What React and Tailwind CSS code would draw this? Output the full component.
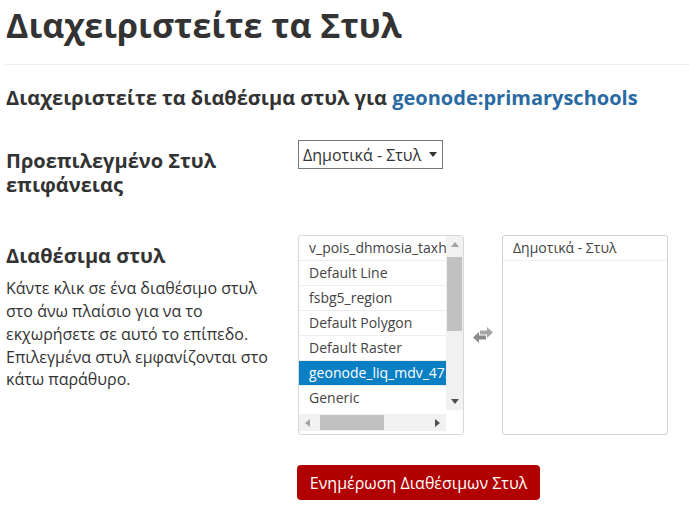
import React from "react";

const availableStyles = [
  "v_pois_dhmosia_taxh",
  "Default Line",
  "fsbg5_region",
  "Default Polygon",
  "Default Raster",
  "geonode_liq_mdv_4720",
  "Generic",
  "Default Point",
];

function Tri({ dir, color }) {
  if (dir === "up") {
    return (
      <svg width="8" height="5" viewBox="0 0 8 5">
        <polygon points="0,5 4,0 8,5" fill={color} />
      </svg>
    );
  }
  if (dir === "down") {
    return (
      <svg width="8" height="5" viewBox="0 0 8 5">
        <polygon points="0,0 8,0 4,5" fill={color} />
      </svg>
    );
  }
  if (dir === "left") {
    return (
      <svg width="5" height="8" viewBox="0 0 5 8">
        <polygon points="5,0 5,8 0,4" fill={color} />
      </svg>
    );
  }
  return (
    <svg width="5" height="8" viewBox="0 0 5 8">
      <polygon points="0,0 0,8 5,4" fill={color} />
    </svg>
  );
}

function SwapIcon() {
  return (
    <svg width="22" height="18" viewBox="0 0 22 18">
      <path d="M8 4.5 H15 V1 L21 6.5 L15 12 V8.5 H8 Z" fill="#a6a6a6" />
      <path d="M14 9.5 H7 V6 L1 11.5 L7 17 V13.5 H14 Z" fill="#8a8a8a" />
    </svg>
  );
}

export default function App() {
  return (
    <div className="h-[509px] w-[689px] overflow-hidden bg-white text-[#333] font-['Open_Sans',_'Noto_Sans',_sans-serif]">
      <div className="pl-[5px]">
        <h1 className="pl-[1px] pt-[4px] text-[34px] font-bold leading-[42px]">
          Διαχειριστείτε τα Στυλ
        </h1>
        <div className="mt-[18px] h-px bg-[#eeeeee]" />
        <h3 className="mt-[21px] pl-[1px] text-[20px] font-bold leading-[24px]">
          Διαχειριστείτε τα διαθέσιμα στυλ για{" "}
          <span className="text-[#2a6aa3]">geonode:primaryschools</span>
        </h3>

        <div className="mt-[30px] flex">
          <div className="w-[293px] pl-[1px] pt-[9px] text-[20px] font-bold leading-[24px]">
            Προεπιλεγμένο Στυλ
            <br />
            επιφάνειας
          </div>
          <div className="flex h-[29px] items-center gap-[8px] border border-[#767676] pl-[4px] pr-[5px] text-[16px] leading-[20px] text-[#333]">
            <span>Δημοτικά - Στυλ</span>
            <Tri dir="down" color="#333" />
          </div>
        </div>

        <div className="mt-[38px] flex">
          <div className="w-[293px] pl-[1px]">
            <div className="pt-[9px] text-[20px] font-bold leading-[24px]">Διαθέσιμα στυλ</div>
            <p className="mt-[9px] text-[16px] leading-[22.86px] text-[#333]">
              Κάντε κλικ σε ένα διαθέσιμο στυλ
              <br />
              στο άνω πλαίσιο για να το
              <br />
              εκχωρήσετε σε αυτό το επίπεδο.
              <br />
              Επιλεγμένα στυλ εμφανίζονται στο
              <br />
              κάτω παράθυρο.
            </p>
          </div>

          <div className="flex">
            <div className="flex h-[200px] w-[166px] flex-col rounded-[3px] border border-[#d8d8d8] bg-white">
              <div className="flex h-[174px]">
                <div className="w-[147px] overflow-hidden">
                  {availableStyles.map((s, i) => (
                    <div
                      key={s}
                      className={
                        i === 5
                          ? "h-[25px] overflow-hidden whitespace-nowrap border-b border-[#eeeeee] bg-[#0a7fc4] pl-[10px] text-[14px] leading-[24px] text-white"
                          : "h-[25px] overflow-hidden whitespace-nowrap border-b border-[#eeeeee] pl-[10px] text-[14px] leading-[24px] text-[#444]"
                      }
                    >
                      {s}
                    </div>
                  ))}
                </div>
                <div className="flex w-[17px] flex-col items-center bg-[#f1f1f1]">
                  <div className="flex h-[17px] items-center justify-center">
                    <Tri dir="up" color="#a3a3a3" />
                  </div>
                  <div className="mt-[4px] h-[74px] w-[15px] bg-[#c1c1c1]" />
                  <div className="flex-1" />
                  <div className="flex h-[17px] items-center justify-center">
                    <Tri dir="down" color="#505050" />
                  </div>
                </div>
              </div>
              <div className="mt-[4px] flex h-[17px]">
                <div className="flex w-[147px] items-center bg-[#f1f1f1]">
                  <div className="flex w-[17px] justify-center">
                    <Tri dir="left" color="#a3a3a3" />
                  </div>
                  <div className="ml-[4px] h-[15px] w-[64px] bg-[#c1c1c1]" />
                  <div className="flex-1" />
                  <div className="flex w-[17px] justify-center">
                    <Tri dir="right" color="#505050" />
                  </div>
                </div>
                <div className="w-[17px] bg-white" />
              </div>
            </div>

            <div className="flex w-[38px] items-center justify-center">
              <SwapIcon />
            </div>

            <div className="h-[200px] w-[166px] rounded-[3px] border border-[#d0d0d0] bg-white">
              <div className="h-[25px] border-b border-[#eeeeee] pl-[10px] text-[14px] leading-[24px] text-[#444]">
                Δημοτικά - Στυλ
              </div>
            </div>
          </div>
        </div>

        <div className="mt-[30px] pl-[292px]">
          <button className="h-[35px] w-[243px] rounded-[4px] bg-[#b00000] text-[16px] text-white">
            Ενημέρωση Διαθέσιμων Στυλ
          </button>
        </div>
      </div>
    </div>
  );
}
